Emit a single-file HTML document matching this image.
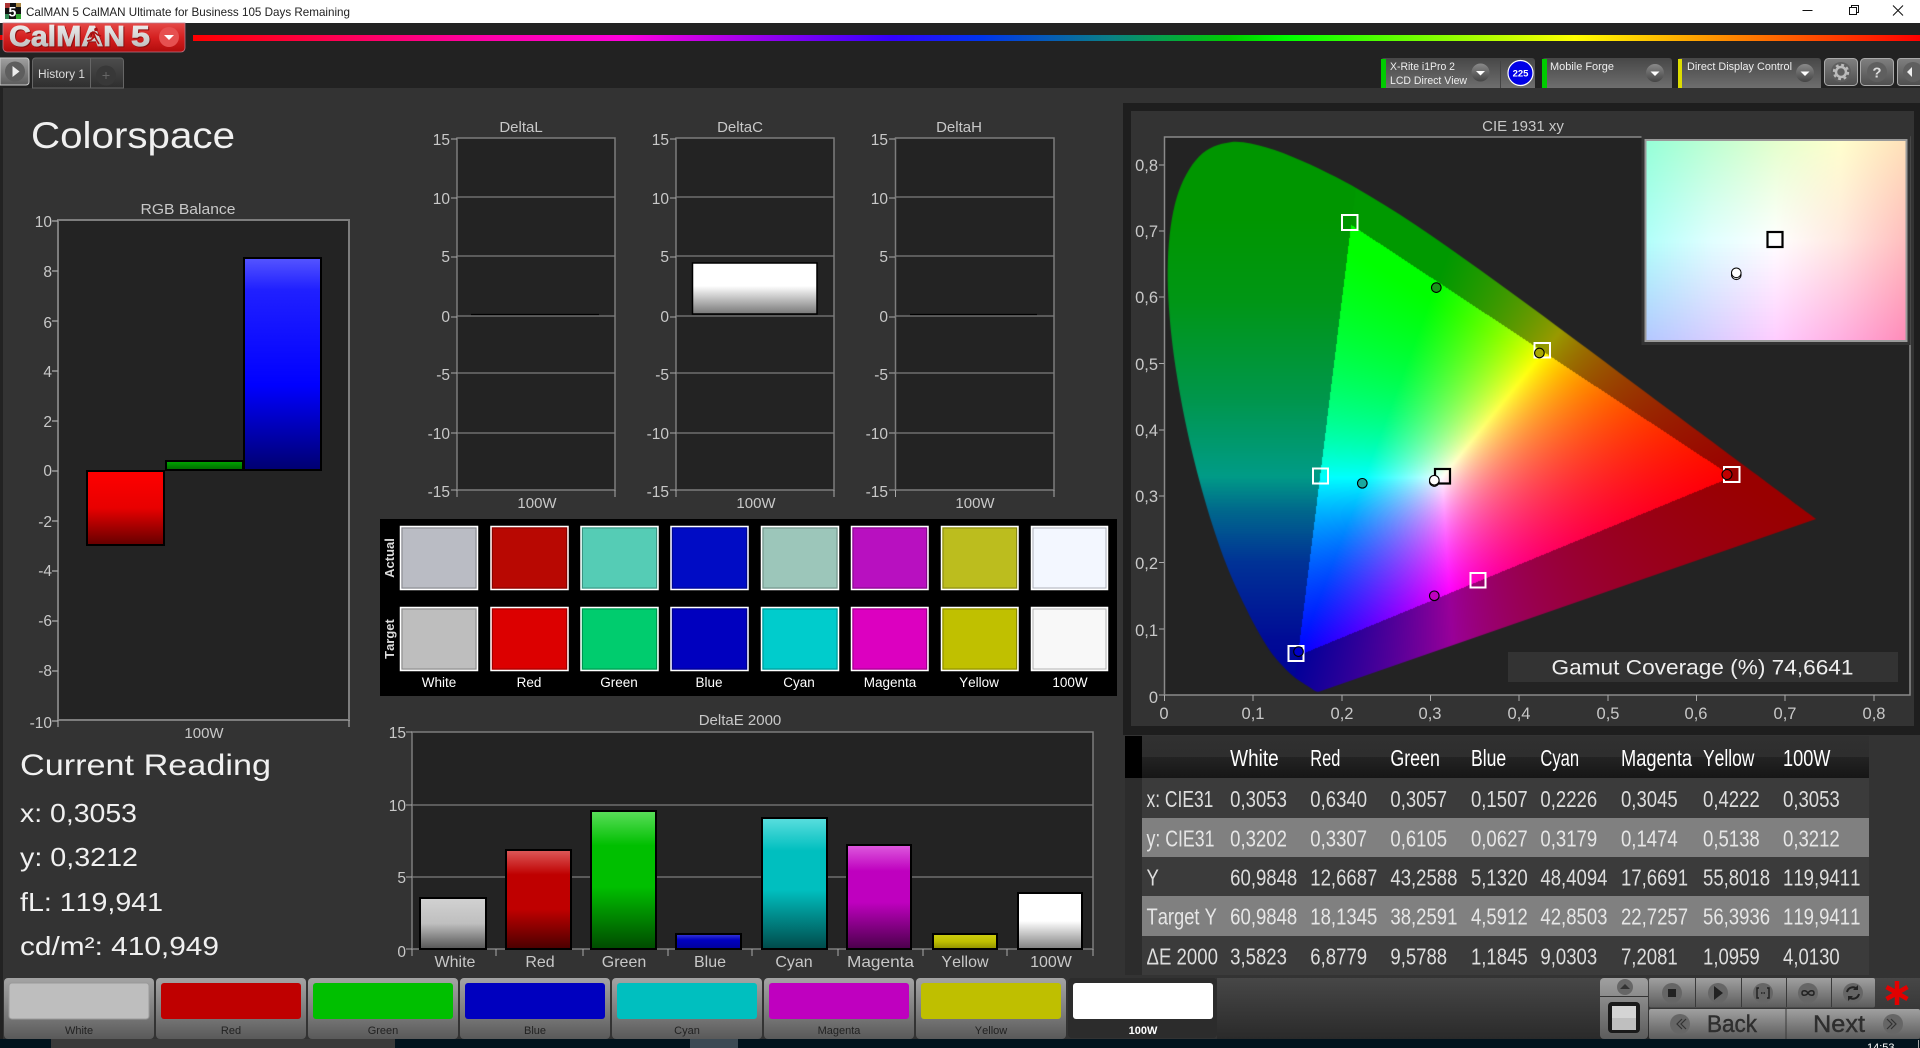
<!DOCTYPE html>
<html><head><meta charset="utf-8"><title>CalMAN</title>
<style>
html,body{margin:0;padding:0;background:#333;width:1920px;height:1048px;overflow:hidden}
svg{position:absolute;left:0;top:0;font-family:"Liberation Sans",sans-serif;font-kerning:none}
canvas{position:absolute;display:block}
</style></head><body>
<svg width="1920" height="1048" viewBox="0 0 1920 1048">
<defs>
<linearGradient id="logo" x1="0" y1="0" x2="0" y2="1"><stop offset="0" stop-color="#e54a48"/><stop offset=".5" stop-color="#d52020"/><stop offset="1" stop-color="#b20c0c"/></linearGradient>
<linearGradient id="logot" x1="0" y1="0" x2="0" y2="1"><stop offset="0" stop-color="#f4f4f4"/><stop offset="1" stop-color="#b4b4b4"/></linearGradient>
<linearGradient id="rb" x1="0" y1="0" x2="1" y2="0"><stop offset="0" stop-color="#f00"/><stop offset=".171" stop-color="#f0a"/><stop offset=".172" stop-color="#f0a"/><stop offset=".25" stop-color="#f0d"/><stop offset=".405" stop-color="#30f"/><stop offset=".455" stop-color="#03e"/><stop offset=".53" stop-color="#0a7f88"/><stop offset=".6" stop-color="#0c0"/><stop offset=".635" stop-color="#0f0"/><stop offset=".80" stop-color="#ff0"/><stop offset=".89" stop-color="#f80"/><stop offset="1" stop-color="#f00"/></linearGradient>
<linearGradient id="tab" x1="0" y1="0" x2="0" y2="1"><stop offset="0" stop-color="#4d4d4d"/><stop offset="1" stop-color="#2e2e2e"/></linearGradient>
<linearGradient id="card" x1="0" y1="0" x2="0" y2="1"><stop offset="0" stop-color="#474747"/><stop offset="1" stop-color="#6e6e6e"/></linearGradient>
<linearGradient id="gb" x1="0" y1="0" x2="0" y2="1"><stop offset="0" stop-color="#808080"/><stop offset="1" stop-color="#4e4e4e"/></linearGradient>
<linearGradient id="rnd" x1="0" y1="0" x2="0" y2="1"><stop offset="0" stop-color="#8a8a8a"/><stop offset="1" stop-color="#444"/></linearGradient>
<linearGradient id="btn" x1="0" y1="0" x2="0" y2="1"><stop offset="0" stop-color="#a4a4a4"/><stop offset=".6" stop-color="#7a7a7a"/><stop offset="1" stop-color="#595959"/></linearGradient>
<linearGradient id="ctl" x1="0" y1="0" x2="0" y2="1"><stop offset="0" stop-color="#a0a0a0"/><stop offset="1" stop-color="#5c5c5c"/></linearGradient>
<linearGradient id="bot" x1="0" y1="0" x2="0" y2="1"><stop offset="0" stop-color="#474747"/><stop offset="1" stop-color="#2a2a2a"/></linearGradient>
<linearGradient id="hd" x1="0" y1="0" x2="0" y2="1"><stop offset="0" stop-color="#303030"/><stop offset=".5" stop-color="#2e2e2e"/><stop offset=".5" stop-color="#232323"/><stop offset="1" stop-color="#161616"/></linearGradient>
<linearGradient id="gR" x1="0" y1="0" x2="0" y2="1"><stop offset="0" stop-color="#f00"/><stop offset=".5" stop-color="#e80000"/><stop offset="1" stop-color="#640000"/></linearGradient>
<linearGradient id="gG" x1="0" y1="0" x2="0" y2="1"><stop offset="0" stop-color="#0a0"/><stop offset="1" stop-color="#060"/></linearGradient>
<linearGradient id="gB" x1="0" y1="0" x2="0" y2="1"><stop offset="0" stop-color="#5555ff"/><stop offset=".15" stop-color="#2020ff"/><stop offset=".6" stop-color="#00f"/><stop offset="1" stop-color="#000070"/></linearGradient>
<linearGradient id="gC" x1="0" y1="0" x2="0" y2="1"><stop offset="0" stop-color="#fff"/><stop offset=".45" stop-color="#fff"/><stop offset="1" stop-color="#777"/></linearGradient>
<linearGradient id="e1" x1="0" y1="0" x2="0" y2="1"><stop offset="0" stop-color="#d2d2d2"/><stop offset=".5" stop-color="#bfbfbf"/><stop offset="1" stop-color="#555"/></linearGradient>
<linearGradient id="e2" x1="0" y1="0" x2="0" y2="1"><stop offset="0" stop-color="#dd5a5a"/><stop offset=".25" stop-color="#bf0000"/><stop offset=".6" stop-color="#bf0000"/><stop offset="1" stop-color="#4a0000"/></linearGradient>
<linearGradient id="e3" x1="0" y1="0" x2="0" y2="1"><stop offset="0" stop-color="#5ade5a"/><stop offset=".25" stop-color="#00bf00"/><stop offset=".55" stop-color="#00bf00"/><stop offset="1" stop-color="#004a00"/></linearGradient>
<linearGradient id="e4" x1="0" y1="0" x2="0" y2="1"><stop offset="0" stop-color="#3a3ad8"/><stop offset=".4" stop-color="#0000bf"/><stop offset="1" stop-color="#00009a"/></linearGradient>
<linearGradient id="e5" x1="0" y1="0" x2="0" y2="1"><stop offset="0" stop-color="#5adede"/><stop offset=".25" stop-color="#00bfbf"/><stop offset=".55" stop-color="#00bfbf"/><stop offset="1" stop-color="#004a4a"/></linearGradient>
<linearGradient id="e6" x1="0" y1="0" x2="0" y2="1"><stop offset="0" stop-color="#de5ade"/><stop offset=".25" stop-color="#bf00bf"/><stop offset=".55" stop-color="#bf00bf"/><stop offset="1" stop-color="#4a004a"/></linearGradient>
<linearGradient id="e7" x1="0" y1="0" x2="0" y2="1"><stop offset="0" stop-color="#cccc10"/><stop offset=".5" stop-color="#bfbf00"/><stop offset="1" stop-color="#8f8f00"/></linearGradient>
<linearGradient id="e8" x1="0" y1="0" x2="0" y2="1"><stop offset="0" stop-color="#fff"/><stop offset=".5" stop-color="#fff"/><stop offset="1" stop-color="#808080"/></linearGradient>
<g id="dd"><circle r="9" fill="url(#rnd)"/><path d="M-4.500-1.500h9L0 3z" fill="#fff"/></g>
</defs>

<!-- base -->
<rect width="1920" height="1048" fill="#333"/>
<rect y="23" width="1920" height="65" fill="#222"/>
<rect y="88" width="3" height="960" fill="#222"/>
<rect width="1920" height="23" fill="#fff"/>
<rect x="5" y="3" width="16" height="16" fill="#111"/>
<rect x="5" y="3" width="5" height="5" fill="#a33"/><rect x="16" y="14" width="5" height="5" fill="#3a3"/><rect x="5" y="14" width="4" height="5" fill="#385"/><rect x="16" y="3" width="5" height="4" fill="#a84"/>
<text x="8.500" y="16.500" font-size="14" font-weight="bold" fill="#fff">5</text>
<text x="26" y="16" font-size="12" fill="#222" textLength="324" lengthAdjust="spacingAndGlyphs">CalMAN 5 CalMAN Ultimate for Business 105 Days Remaining</text>
<path d="M1802.500 10.500h10" stroke="#111" fill="none"/>
<path d="M1849.500 7.500h7v7h-7zM1851.500 7.500v-2h7v7h-2" stroke="#111" fill="none"/>
<path d="M1893 5.500l10 10M1903 5.500l-10 10" stroke="#111" fill="none"/>

<!-- logo -->
<rect x="0" y="35" width="3" height="5" fill="#e00"/>
<path d="M3 23h182v25a4 4 0 0 1-4 4H7a4 4 0 0 1-4-4z" fill="url(#logo)" stroke="#b78" stroke-width=".8"/>
<g style="filter:drop-shadow(1px 1px 0 #8a1010)">
<text x="9" y="46" font-size="29" font-weight="bold" fill="url(#logot)" stroke="url(#logot)" stroke-width=".8" textLength="116" lengthAdjust="spacingAndGlyphs">CalMAN</text>
<text x="131" y="46" font-size="29" font-weight="bold" fill="url(#logot)" stroke="url(#logot)" stroke-width=".8" textLength="19" lengthAdjust="spacingAndGlyphs">5</text>
</g>
<path d="M88 38l3-5 3-1 4 3 3 1M93 32l3 7 3 5M94 37l-3 3-4 1" stroke="#a11" stroke-width="1.600" fill="none"/><circle cx="96" cy="29.500" r="1.800" fill="#a11"/>
<circle cx="169" cy="37" r="10" fill="#e65050"/><path d="M164 35h10l-5 5z" fill="#fff"/>
<rect x="193" y="35" width="1727" height="6" fill="url(#rb)"/>

<!-- tabs -->
<path d="M0 58h26a3 3 0 0 1 3 3v21a3 3 0 0 1-3 3H0z" fill="url(#ctl)" stroke="#ccc"/>
<circle cx="15" cy="71.500" r="10" fill="#5e5e5e"/><path d="M12.500 66v11l7-5.500z" fill="#eee"/>
<path d="M32.500 88V61a3 3 0 0 1 3-3h85a3 3 0 0 1 3 3v27z" fill="url(#tab)" stroke="#666"/>
<path d="M90.500 58v30" stroke="#666"/>
<text x="38" y="78" font-size="11.500" fill="#ddd" textLength="47" lengthAdjust="spacingAndGlyphs">History 1</text>
<circle cx="106" cy="75.500" r="10" fill="#383838"/><path d="M102.500 75.500h7M106 72v7" stroke="#666"/>

<!-- device cards -->
<g>
<path d="M1381 88V61a3 3 0 0 1 3-3h148a3 3 0 0 1 3 3v27z" fill="url(#card)"/>
<rect x="1381" y="59" width="5" height="29" fill="#0c0"/>
<text x="1390" y="70" font-size="11" fill="#eee" textLength="65" lengthAdjust="spacingAndGlyphs">X-Rite i1Pro 2</text>
<text x="1390" y="84" font-size="11" fill="#eee" textLength="77" lengthAdjust="spacingAndGlyphs">LCD Direct View</text>
<use href="#dd" x="1480.500" y="72.500"/>
<path d="M1500.500 61v27" stroke="#444"/>
<circle cx="1520.500" cy="73" r="12.500" fill="#0000e6" stroke="#fff" stroke-width="1.200"/>
<text x="1520.500" y="76.500" font-size="9.500" font-weight="bold" fill="#fff" text-anchor="middle">225</text>
<path d="M1542 88V61a3 3 0 0 1 3-3h124a3 3 0 0 1 3 3v27z" fill="url(#card)"/>
<rect x="1542" y="59" width="5" height="29" fill="#0c0"/>
<text x="1550" y="70" font-size="11" fill="#eee" textLength="64" lengthAdjust="spacingAndGlyphs">Mobile Forge</text>
<use href="#dd" x="1655" y="73"/>
<path d="M1678 88V61a3 3 0 0 1 3-3h137a3 3 0 0 1 3 3v27z" fill="url(#card)"/>
<rect x="1678" y="59" width="4" height="29" fill="#dd0"/>
<text x="1687" y="70" font-size="11" fill="#eee" textLength="105" lengthAdjust="spacingAndGlyphs">Direct Display Control</text>
<use href="#dd" x="1805" y="73"/>
<rect x="1824.500" y="58.500" width="33" height="27" rx="4" fill="url(#gb)" stroke="#aaa"/>
<rect x="1860.500" y="58.500" width="33" height="27" rx="4" fill="url(#gb)" stroke="#aaa"/>
<path d="M1897.500 58.500H1920v27h-22.500a3 3 0 0 1-3-3v-21a3 3 0 0 1 3-3z" fill="url(#gb)" stroke="#aaa" transform="translate(3 0)"/>
<circle cx="1841" cy="72" r="10" fill="#5f5f5f"/>
<circle cx="1841" cy="72" r="5" fill="none" stroke="#bbb" stroke-width="2.500"/>
<circle cx="1841" cy="72" r="7" fill="none" stroke="#bbb" stroke-width="2.400" stroke-dasharray="2.800 2.700"/>
<circle cx="1877" cy="72" r="10" fill="#5f5f5f"/>
<text x="1877" y="77.500" font-size="15" font-weight="bold" fill="#ddd" text-anchor="middle">?</text>
<circle cx="1913" cy="72" r="10" fill="#5f5f5f"/><path d="M1912 67v10l-5-5z" fill="#eee"/>
</g>

<!-- titles -->
<text x="31" y="148" font-size="37" fill="#f0f0f0" textLength="204" lengthAdjust="spacingAndGlyphs">Colorspace</text>
<text x="188" y="214" font-size="15" fill="#c8c8c8" text-anchor="middle" textLength="95" lengthAdjust="spacingAndGlyphs">RGB Balance</text>

<!-- RGB balance -->
<rect x="58" y="220" width="291" height="500" fill="#232323" stroke="#7d7d7d" stroke-width="2"/>
<path d="M52 221h6M52 271h6M52 321h6M52 371h6M52 421h6M52 471h6M52 521h6M52 571h6M52 621h6M52 671h6M52 721h6M58 720v7M349 720v7" stroke="#aaa" stroke-width="1.200"/>
<g font-size="15.500" fill="#c8c8c8" text-anchor="end">
<text x="52" y="227">10</text><text x="52" y="277">8</text><text x="52" y="328">6</text><text x="52" y="377">4</text><text x="52" y="427">2</text><text x="52" y="476">0</text><text x="52" y="527">-2</text><text x="52" y="576">-4</text><text x="52" y="626">-6</text><text x="52" y="676">-8</text><text x="52" y="728">-10</text>
</g>
<rect x="87" y="471" width="77" height="74" fill="url(#gR)" stroke="#000" stroke-width="2"/>
<rect x="166" y="461" width="77" height="9" fill="url(#gG)" stroke="#000" stroke-width="2"/>
<rect x="244" y="258" width="77" height="212" fill="url(#gB)" stroke="#000" stroke-width="2"/>
<text x="204" y="738" font-size="15" fill="#c8c8c8" text-anchor="middle">100W</text>

<!-- current reading -->
<text x="20" y="775" font-size="30" fill="#f0f0f0" textLength="251" lengthAdjust="spacingAndGlyphs">Current Reading</text>
<g font-size="26" fill="#f0f0f0">
<text x="20" y="822" textLength="117" lengthAdjust="spacingAndGlyphs">x: 0,3053</text>
<text x="20" y="866" textLength="118" lengthAdjust="spacingAndGlyphs">y: 0,3212</text>
<text x="20" y="911" textLength="143" lengthAdjust="spacingAndGlyphs">fL: 119,941</text>
<text x="20" y="955" textLength="199" lengthAdjust="spacingAndGlyphs">cd/m²: 410,949</text>
</g>

<!-- Delta charts -->
<g>
<rect x="457" y="138" width="158" height="352" fill="#232323" stroke="#7d7d7d" stroke-width="1.500"/>
<path d="M457 197h158M457 256h158M457 316h158M457 373h158M457 433h158" stroke="#7d7d7d" stroke-width="1.300"/>
<path d="M451 139h6M451 198h6M451 257h6M451 317h6M451 373h6M451 433h6M451 490h6M457 490v7M615 490v7" stroke="#aaa"/>
<g font-size="15.500" fill="#c8c8c8" text-anchor="end">
<text x="450" y="145">15</text><text x="450" y="204">10</text><text x="450" y="262">5</text><text x="450" y="322">0</text><text x="450" y="380">-5</text><text x="450" y="439">-10</text><text x="450" y="497">-15</text>
</g>
<text x="521" y="132" font-size="15" fill="#c8c8c8" text-anchor="middle">DeltaL</text>
<text x="537" y="508" font-size="15" fill="#c8c8c8" text-anchor="middle">100W</text>
<path d="M471 314.500h128" stroke="#000" stroke-width="1.200"/>
</g>
<g>
<rect x="676" y="138" width="158" height="352" fill="#232323" stroke="#7d7d7d" stroke-width="1.500"/>
<path d="M676 197h158M676 256h158M676 316h158M676 373h158M676 433h158" stroke="#7d7d7d" stroke-width="1.300"/>
<path d="M670 139h6M670 198h6M670 257h6M670 317h6M670 373h6M670 433h6M670 490h6M676 490v7M834 490v7" stroke="#aaa"/>
<g font-size="15.500" fill="#c8c8c8" text-anchor="end">
<text x="669" y="145">15</text><text x="669" y="204">10</text><text x="669" y="262">5</text><text x="669" y="322">0</text><text x="669" y="380">-5</text><text x="669" y="439">-10</text><text x="669" y="497">-15</text>
</g>
<text x="740" y="132" font-size="15" fill="#c8c8c8" text-anchor="middle">DeltaC</text>
<text x="756" y="508" font-size="15" fill="#c8c8c8" text-anchor="middle">100W</text>
<rect x="692.500" y="263" width="124.500" height="51" fill="url(#gC)" stroke="#000" stroke-width="1.500"/>
</g>
<g>
<rect x="895.500" y="138" width="158.500" height="352" fill="#232323" stroke="#7d7d7d" stroke-width="1.500"/>
<path d="M895 197h159M895 256h159M895 316h159M895 373h159M895 433h159" stroke="#7d7d7d" stroke-width="1.300"/>
<path d="M889 139h6M889 198h6M889 257h6M889 317h6M889 373h6M889 433h6M889 490h6M895.500 490v7M1054 490v7" stroke="#aaa"/>
<g font-size="15.500" fill="#c8c8c8" text-anchor="end">
<text x="888" y="145">15</text><text x="888" y="204">10</text><text x="888" y="262">5</text><text x="888" y="322">0</text><text x="888" y="380">-5</text><text x="888" y="439">-10</text><text x="888" y="497">-15</text>
</g>
<text x="959" y="132" font-size="15" fill="#c8c8c8" text-anchor="middle">DeltaH</text>
<text x="975" y="508" font-size="15" fill="#c8c8c8" text-anchor="middle">100W</text>
<path d="M910 314.500h127" stroke="#000" stroke-width="1.200"/>
</g>

<!-- swatches -->
<rect x="380" y="519" width="737" height="177" fill="#000"/>
<g stroke="#fff" stroke-width="1.500">
<rect x="400.500" y="526.500" width="77" height="63" fill="#babcc4"/><rect x="491" y="526.500" width="77" height="63" fill="#b80802"/><rect x="581" y="526.500" width="77" height="63" fill="#55ccb5"/><rect x="671" y="526.500" width="77" height="63" fill="#000cc5"/><rect x="761.500" y="526.500" width="77" height="63" fill="#9cc6ba"/><rect x="851.500" y="526.500" width="76.500" height="63" fill="#b810c0"/><rect x="941.500" y="526.500" width="76.500" height="63" fill="#bcbd1e"/><rect x="1031.500" y="526.500" width="76" height="63" fill="#f3f7ff"/>
<rect x="400.500" y="607.500" width="77" height="63" fill="#bebebe"/><rect x="491" y="607.500" width="77" height="63" fill="#dc0000"/><rect x="581" y="607.500" width="77" height="63" fill="#00cc6e"/><rect x="671" y="607.500" width="77" height="63" fill="#0000bf"/><rect x="761.500" y="607.500" width="77" height="63" fill="#00cccc"/><rect x="851.500" y="607.500" width="76.500" height="63" fill="#dc00c0"/><rect x="941.500" y="607.500" width="76.500" height="63" fill="#c0c000"/><rect x="1031.500" y="607.500" width="76" height="63" fill="#f8f8f8"/>
</g>
<g fill="none" stroke="#000" stroke-opacity=".28" stroke-width="1">
<path d="M402 528h74v60h-74zM492.500 528h74v60h-74zM582.500 528h74v60h-74zM672.500 528h74v60h-74zM763 528h74v60h-74zM853 528h73.500v60H853zM943 528h73.500v60H943zM1033 528h73v60h-73z"/>
<path d="M402 609h74v60h-74zM492.500 609h74v60h-74zM582.500 609h74v60h-74zM672.500 609h74v60h-74zM763 609h74v60h-74zM853 609h73.500v60H853zM943 609h73.500v60H943zM1033 609h73v60h-73z"/>
</g>
<g font-size="13.500" fill="#fff" text-anchor="middle">
<text x="439" y="687">White</text><text x="529" y="687">Red</text><text x="619" y="687">Green</text><text x="709" y="687">Blue</text><text x="799" y="687">Cyan</text><text x="890" y="687">Magenta</text><text x="979" y="687">Yellow</text><text x="1070" y="687">100W</text>
<text transform="translate(394 558) rotate(-90)" font-size="13" font-weight="bold" fill="#ddd">Actual</text>
<text transform="translate(394 639) rotate(-90)" font-size="13" font-weight="bold" fill="#ddd">Target</text>
</g>

<!-- DeltaE -->
<text x="740" y="725" font-size="15" fill="#c8c8c8" text-anchor="middle">DeltaE 2000</text>
<rect x="412" y="732" width="681" height="217" fill="#232323" stroke="#7d7d7d" stroke-width="1.500"/>
<path d="M412 805h681M412 877h681" stroke="#7d7d7d" stroke-width="1.300"/>
<path d="M406 732h6M406 805h6M406 877h6M406 949h6M412 949v7M496 949v7M583 949v7M668 949v7M752 949v7M838 949v7M923 949v7M1007 949v7M1093 949v7" stroke="#aaa"/>
<g font-size="15.500" fill="#c8c8c8" text-anchor="end">
<text x="406" y="738">15</text><text x="406" y="811">10</text><text x="406" y="883">5</text><text x="406" y="957">0</text>
</g>
<g stroke="#000" stroke-width="2">
<rect x="420" y="898" width="66" height="51" fill="url(#e1)"/>
<rect x="506" y="850" width="65" height="99" fill="url(#e2)"/>
<rect x="591" y="811" width="65" height="138" fill="url(#e3)"/>
<rect x="676" y="934" width="65" height="15" fill="url(#e4)"/>
<rect x="762" y="818" width="65" height="131" fill="url(#e5)"/>
<rect x="847" y="845" width="64" height="104" fill="url(#e6)"/>
<rect x="933" y="934" width="64" height="15" fill="url(#e7)"/>
<rect x="1018" y="893" width="64" height="56" fill="url(#e8)"/>
</g>
<g font-size="16" fill="#c8c8c8" text-anchor="middle">
<text x="455" y="967">White</text><text x="540" y="967">Red</text><text x="624" y="967">Green</text><text x="710" y="967">Blue</text><text x="794" y="967">Cyan</text><text x="880.500" y="967" textLength="67" lengthAdjust="spacingAndGlyphs">Magenta</text><text x="965" y="967">Yellow</text><text x="1051" y="967">100W</text>
</g>

<!-- bottom bar -->
<rect x="1217" y="978" width="703" height="61" fill="url(#bot)"/>
<rect x="0" y="1039" width="1920" height="9" fill="#02131d"/>
<rect x="51" y="1039" width="344" height="9" fill="#3a3a3a"/>
<rect x="690" y="1039" width="48" height="9" fill="#3c4a54"/>
<text x="1867" y="1051" font-size="11" fill="#fff">14:53</text>
<path d="M1918.500 1040v8" stroke="#aaa"/>
<g>
<rect x="4" y="978" width="150" height="61" rx="4" fill="url(#btn)"/>
<rect x="156" y="978" width="150" height="61" rx="4" fill="url(#btn)"/>
<rect x="308" y="978" width="150" height="61" rx="4" fill="url(#btn)"/>
<rect x="460" y="978" width="150" height="61" rx="4" fill="url(#btn)"/>
<rect x="612" y="978" width="150" height="61" rx="4" fill="url(#btn)"/>
<rect x="764" y="978" width="150" height="61" rx="4" fill="url(#btn)"/>
<rect x="916" y="978" width="150" height="61" rx="4" fill="url(#btn)"/>
<rect x="1068" y="978" width="149" height="60" rx="4" fill="#2c2c2c"/>
<rect x="9" y="983" width="140" height="36" rx="3" fill="#bebebe" stroke="#999"/>
<rect x="161" y="983" width="140" height="36" rx="3" fill="#bf0000"/>
<rect x="313" y="983" width="140" height="36" rx="3" fill="#00bf00"/>
<rect x="465" y="983" width="140" height="36" rx="3" fill="#0000bf"/>
<rect x="617" y="983" width="140" height="36" rx="3" fill="#00bfbf"/>
<rect x="769" y="983" width="140" height="36" rx="3" fill="#bf00bf"/>
<rect x="921" y="983" width="140" height="36" rx="3" fill="#bfbf00"/>
<rect x="1073" y="983" width="140" height="36" rx="3" fill="#fff"/>
</g>
<g font-size="11" fill="#222" text-anchor="middle">
<text x="79" y="1034">White</text><text x="231" y="1034">Red</text><text x="383" y="1034">Green</text><text x="535" y="1034">Blue</text><text x="687" y="1034">Cyan</text><text x="839" y="1034">Magenta</text><text x="991" y="1034">Yellow</text><text x="1143" y="1034" fill="#fff" font-weight="bold">100W</text>
</g>

<!-- control block -->
<rect x="1600" y="978" width="48" height="61" rx="4" fill="url(#ctl)"/>
<path d="M1600 996.500h48" stroke="#333"/>
<circle cx="1625" cy="987" r="8" fill="#666"/><path d="M1620 989h10l-5-5z" fill="#333"/>
<rect x="1608" y="1002" width="32" height="31" rx="4" fill="#1a1a1a"/><rect x="1612" y="1006" width="24" height="24" fill="#d4d4d4"/><rect x="1612" y="1018" width="24" height="12" fill="#bfbfbf"/>
<rect x="1649" y="978" width="226" height="29.500" rx="2" fill="url(#ctl)"/>
<path d="M1695.500 978v29M1741.500 978v29M1786.500 978v29M1831.500 978v29" stroke="#3a3a3a"/>
<rect x="1649" y="1009" width="271" height="30" rx="2" fill="url(#ctl)"/>
<path d="M1786 1009v30" stroke="#3a3a3a"/>
<g fill="#666"><circle cx="1672" cy="993" r="10"/><circle cx="1718" cy="993" r="10"/><circle cx="1763" cy="993" r="10"/><circle cx="1808" cy="993" r="10"/><circle cx="1853" cy="993" r="10"/><circle cx="1680" cy="1024" r="10"/><circle cx="1893" cy="1024" r="10"/></g>
<rect x="1668" y="989" width="8" height="8" fill="#222"/>
<path d="M1714 986v14l9-7z" fill="#222"/>
<path d="M1759 988h-2v10h2M1767 988h2v10h-2" stroke="#222" stroke-width="1.500" fill="none"/><path d="M1761 993h4" stroke="#222" stroke-width="1.500" stroke-dasharray="1.500 1"/>
<path d="M1808 993c-2-3-6-3-6 0s4 3 6 0 6-3 6 0-4 3-6 0z" stroke="#222" stroke-width="1.500" fill="none"/>
<path d="M1847 992a6 6 0 0 1 10-3M1859 994a6 6 0 0 1-10 3" stroke="#222" stroke-width="2" fill="none"/><path d="M1858 985v5h-5zM1848 1001v-5h5z" fill="#222"/>
<path d="M1682 1019l-5 5 5 5M1686 1019l-5 5 5 5" stroke="#333" stroke-width="1.200" fill="none"/>
<path d="M1891 1019l5 5-5 5M1887 1019l5 5-5 5" stroke="#333" stroke-width="1.200" fill="none"/>
<text x="1707" y="1032" font-size="24" fill="#2e2e2e" stroke="#2e2e2e" stroke-width=".4" textLength="50" lengthAdjust="spacingAndGlyphs">Back</text>
<text x="1813" y="1032" font-size="24" fill="#2e2e2e" stroke="#2e2e2e" stroke-width=".4" textLength="52" lengthAdjust="spacingAndGlyphs">Next</text>
<path d="M1897 981v24M1886.500 987l21 12M1907.500 987l-21 12" stroke="#e20000" stroke-width="4.500"/>

<!-- CIE panel -->
<rect x="1123" y="103" width="797" height="632" fill="#1e1e1e"/>
<rect x="1131" y="111" width="783" height="615" fill="#333"/>
<text x="1523" y="131" font-size="15" fill="#c8c8c8" text-anchor="middle">CIE 1931 xy</text>
<rect x="1164.500" y="137" width="745.500" height="558" fill="#232323" stroke="#8a8a8a" stroke-width="1.500"/>
<path d="M1159 165h5M1159 231h5M1159 297h5M1159 363.500h5M1159 430h5M1159 496h5M1159 562.500h5M1159 629h5M1159 695h5M1164.500 695v6M1253 695v6M1342 695v6M1430.500 695v6M1519 695v6M1608 695v6M1696.500 695v6M1785 695v6M1874 695v6" stroke="#aaa"/>
<g font-size="16.500" fill="#c8c8c8" text-anchor="end">
<text x="1158" y="171">0,8</text><text x="1158" y="237">0,7</text><text x="1158" y="303">0,6</text><text x="1158" y="370">0,5</text><text x="1158" y="436">0,4</text><text x="1158" y="502">0,3</text><text x="1158" y="569">0,2</text><text x="1158" y="636">0,1</text><text x="1158" y="703">0</text>
</g>
<g font-size="16.500" fill="#c8c8c8" text-anchor="middle">
<text x="1164" y="719">0</text><text x="1253" y="719">0,1</text><text x="1342" y="719">0,2</text><text x="1430" y="719">0,3</text><text x="1519" y="719">0,4</text><text x="1608" y="719">0,5</text><text x="1696" y="719">0,6</text><text x="1785" y="719">0,7</text><text x="1874" y="719">0,8</text>
</g>

<!-- table -->
<rect x="1125" y="736" width="744" height="42" fill="url(#hd)"/>
<rect x="1125" y="736" width="17" height="42" fill="#000"/>
<rect x="1125" y="778" width="17" height="197" fill="#2c2c2c"/>
<rect x="1142" y="778" width="727" height="40" fill="#3b3b3b"/>
<rect x="1142" y="818" width="727" height="39" fill="#808080"/>
<rect x="1142" y="857" width="727" height="39" fill="#3b3b3b"/>
<rect x="1142" y="896" width="727" height="40" fill="#808080"/>
<rect x="1142" y="936" width="727" height="39" fill="#3b3b3b"/>
<g transform="scale(.79 1)" font-size="23.500">
<g fill="#fff"><text x="1557.200" y="766" textLength="61.400" lengthAdjust="spacingAndGlyphs">White</text><text x="1658.600" y="766" textLength="38" lengthAdjust="spacingAndGlyphs">Red</text><text x="1760" y="766" textLength="62.600" lengthAdjust="spacingAndGlyphs">Green</text><text x="1862" y="766" textLength="44.600" lengthAdjust="spacingAndGlyphs">Blue</text><text x="1949.900" y="766" textLength="49" lengthAdjust="spacingAndGlyphs">Cyan</text><text x="2051.900" y="766" textLength="90" lengthAdjust="spacingAndGlyphs">Magenta</text><text x="2155.700" y="766" textLength="65" lengthAdjust="spacingAndGlyphs">Yellow</text><text x="2257" y="766" textLength="60" lengthAdjust="spacingAndGlyphs">100W</text></g>
<g fill="#ddd"><text x="1451.300" y="807" textLength="84.600" lengthAdjust="spacingAndGlyphs">x: CIE31</text><text x="1557.200" y="807">0,3053</text><text x="1658.600" y="807">0,6340</text><text x="1760" y="807">0,3057</text><text x="1862" y="807">0,1507</text><text x="1949.900" y="807">0,2226</text><text x="2051.900" y="807">0,3045</text><text x="2155.700" y="807">0,4222</text><text x="2257" y="807">0,3053</text></g>
<g fill="#e6e6e6"><text x="1451.300" y="846.500" textLength="86" lengthAdjust="spacingAndGlyphs">y: CIE31</text><text x="1557.200" y="846.500">0,3202</text><text x="1658.600" y="846.500">0,3307</text><text x="1760" y="846.500">0,6105</text><text x="1862" y="846.500">0,0627</text><text x="1949.900" y="846.500">0,3179</text><text x="2051.900" y="846.500">0,1474</text><text x="2155.700" y="846.500">0,5138</text><text x="2257" y="846.500">0,3212</text></g>
<g fill="#ddd"><text x="1451.300" y="885.500">Y</text><text x="1557.200" y="885.500">60,9848</text><text x="1658.600" y="885.500">12,6687</text><text x="1760" y="885.500">43,2588</text><text x="1862" y="885.500">5,1320</text><text x="1949.900" y="885.500">48,4094</text><text x="2051.900" y="885.500">17,6691</text><text x="2155.700" y="885.500">55,8018</text><text x="2257" y="885.500">119,9411</text></g>
<g fill="#e6e6e6"><text x="1451.300" y="924.500" textLength="89" lengthAdjust="spacingAndGlyphs">Target Y</text><text x="1557.200" y="924.500">60,9848</text><text x="1658.600" y="924.500">18,1345</text><text x="1760" y="924.500">38,2591</text><text x="1862" y="924.500">4,5912</text><text x="1949.900" y="924.500">42,8503</text><text x="2051.900" y="924.500">22,7257</text><text x="2155.700" y="924.500">56,3936</text><text x="2257" y="924.500">119,9411</text></g>
<g fill="#ddd"><text x="1451.300" y="964.500" textLength="90.400" lengthAdjust="spacingAndGlyphs">ΔE 2000</text><text x="1557.200" y="964.500">3,5823</text><text x="1658.600" y="964.500">6,8779</text><text x="1760" y="964.500">9,5788</text><text x="1862" y="964.500">1,1845</text><text x="1949.900" y="964.500">9,0303</text><text x="2051.900" y="964.500">7,2081</text><text x="2155.700" y="964.500">1,0959</text><text x="2257" y="964.500">4,0130</text></g>
</g>
</svg>

<canvas id="cie" width="745" height="557" style="left:1165px;top:138px"></canvas>
<canvas id="ins" width="260" height="201" style="left:1646px;top:140px"></canvas>

<svg width="1920" height="1048" viewBox="0 0 1920 1048" style="pointer-events:none">
<rect x="1643" y="137.500" width="266" height="206" fill="none" stroke="#333" stroke-width="3"/>
<rect x="1645.500" y="140" width="261" height="201" fill="none" stroke="#9a9a9a" stroke-width="2"/>
<rect x="1508" y="652" width="390" height="30" fill="#333"/>
<text x="1702.500" y="674.500" font-size="21" fill="#eee" text-anchor="middle" textLength="302" lengthAdjust="spacingAndGlyphs">Gamut Coverage (%) 74,6641</text>
<g fill="none" stroke="#fff" stroke-width="2">
<rect x="1342" y="215" width="15.500" height="15"/><rect x="1534.500" y="343" width="15.500" height="14.500"/><rect x="1724" y="467" width="15.500" height="15"/><rect x="1288.500" y="646" width="15" height="15"/><rect x="1313" y="468.500" width="15" height="15"/><rect x="1470.500" y="573" width="15" height="14.500"/>
</g>
<rect x="1435" y="469" width="15" height="14.500" fill="none" stroke="#000" stroke-width="2.200"/>
<g stroke="#000" stroke-width="1.100">
<circle cx="1436.300" cy="287.600" r="4.800" fill="#1a961a"/>
<circle cx="1539.400" cy="353" r="4.800" fill="#a8a800"/>
<circle cx="1727" cy="474.500" r="5" fill="#c00000"/>
<circle cx="1298.500" cy="651.600" r="4.800" fill="#0000c8"/>
<circle cx="1362.300" cy="483.300" r="4.800" fill="#1aa8a0"/>
<circle cx="1434.300" cy="595.800" r="4.800" fill="#c000c0"/>
<circle cx="1434.300" cy="481.500" r="4.800" fill="#ccc"/>
<circle cx="1434.300" cy="480.200" r="4.800" fill="#fff"/>
</g>
<rect x="1767.500" y="232" width="15" height="15" fill="none" stroke="#000" stroke-width="2.200"/>
<circle cx="1736.300" cy="274.800" r="4.800" fill="#ccc" stroke="#000"/>
<circle cx="1736.300" cy="272.800" r="4.800" fill="#fff" stroke="#000"/>
</svg>

<script>
(function(){
var L=[[.1741,.005],[.1733,.0048],[.1726,.0048],[.1714,.0051],[.1689,.0069],[.1644,.0109],[.1566,.0177],[.144,.0297],[.1241,.0578],[.1096,.0868],[.0913,.1327],[.0687,.2007],[.0454,.295],[.0235,.4127],[.0082,.5384],[.0039,.6548],[.0139,.7502],[.0389,.812],[.0743,.8338],[.1142,.8262],[.1547,.8059],[.1929,.7816],[.2296,.7543],[.2658,.7243],[.3016,.6923],[.3373,.6589],[.3731,.6245],[.4087,.5896],[.4441,.5547],[.4788,.5202],[.5125,.4866],[.5448,.4544],[.5752,.4242],[.6029,.3965],[.627,.3725],[.6658,.334],[.6915,.3083],[.7079,.292],[.719,.2809],[.726,.274],[.7347,.2653]];
var c=document.getElementById('cie');if(!c||!c.getContext)return;
var W=745,H=557,ctx=c.getContext('2d');
var off=document.createElement('canvas');off.width=W;off.height=H;var oc=off.getContext('2d');
var im=oc.createImageData(W,H),d=im.data;
var R=[.64,.33],G=[.21,.71],B=[.15,.06];
function side(a,b,x,y){return (b[0]-a[0])*(y-a[1])-(b[1]-a[1])*(x-a[0]);}
var st=[[0,0,0,150],[.08,0,10,150],[.2,0,50,150],[.28,0,105,140],[.33,0,155,135],[.45,0,150,75],[.6,0,150,20],[.72,0,150,0],[1,0,150,0]];
function band(y){for(var i=1;i<st.length;i++){if(y<=st[i][0]){var a=st[i-1],b=st[i],t=(y-a[0])/(b[0]-a[0]);return [a[1]+(b[1]-a[1])*t,a[2]+(b[2]-a[2])*t,a[3]+(b[3]-a[3])*t];}}return [0,150,0];}
for(var py=0;py<H;py++){for(var px=0;px<W;px++){
 var x=(px+.6)/887,y=(695-(py+138))/663;if(y<.001)y=.001;
 var s1=side(B,G,x,y),s2=side(G,R,x,y),s3=side(R,B,x,y);
 var inside=(s1<=0&&s2<=0&&s3<=0);
 var r,g,b;
 if(s1>0){var q=band(y);r=q[0];g=q[1];b=q[2];}
 else{
  var X=x/y,Z=(1-x-y)/y;
  r=3.2406*X-1.5372-.4986*Z;g=-.9689*X+1.8758+.0415*Z;b=.0557*X-.204+1.057*Z;
  r=Math.max(0,r);g=Math.max(0,g);b=Math.max(0,b);
  var m=Math.max(r,g,b,1e-6);r/=m;g/=m;b/=m;
  var k=inside?255:153;r*=k;g*=k;b*=k;
 }
 var i=(py*W+px)*4;d[i]=r;d[i+1]=g;d[i+2]=b;d[i+3]=255;
}}
oc.putImageData(im,0,0);
function PX(p){return [p[0]*887-.6,695-138-p[1]*663];}
var n0=L.length;
ctx.beginPath();
var s0=PX(L[0]);ctx.moveTo(s0[0],s0[1]);
for(var i=0;i<n0-1;i++){
 var p0=PX(L[Math.max(i-1,0)]),p1=PX(L[i]),p2=PX(L[i+1]),p3=PX(L[Math.min(i+2,n0-1)]);
 ctx.bezierCurveTo(p1[0]+(p2[0]-p0[0])/6,p1[1]+(p2[1]-p0[1])/6,p2[0]-(p3[0]-p1[0])/6,p2[1]-(p3[1]-p1[1])/6,p2[0],p2[1]);
}
ctx.closePath();ctx.clip();ctx.drawImage(off,0,0);

var n=document.getElementById('ins'),nc=n.getContext('2d'),w=260,h=201,im2=nc.createImageData(w,h),e=im2.data;
var g3=[[[150,255,215],[190,255,210],[228,255,205],[255,255,205],[255,225,185]],
[[178,255,250],[225,255,255],[255,255,255],[255,232,225],[255,190,190]],
[[180,200,255],[215,205,255],[255,205,255],[255,175,225],[255,140,185]]];
for(var j=0;j<h;j++){for(var a=0;a<w;a++){
 var u=a/(w-1)*4,v=j/(h-1)*2,iu=Math.min(3,Math.floor(u)),iv=Math.min(1,Math.floor(v)),fu=u-iu,fv=v-iv,o=(j*w+a)*4;
 for(var t=0;t<3;t++){
  var tp=g3[iv][iu][t]*(1-fu)+g3[iv][iu+1][t]*fu,bt=g3[iv+1][iu][t]*(1-fu)+g3[iv+1][iu+1][t]*fu;
  e[o+t]=tp*(1-fv)+bt*fv;
 }
 e[o+3]=255;
}}
nc.putImageData(im2,0,0);
})();
</script>
</body></html>
